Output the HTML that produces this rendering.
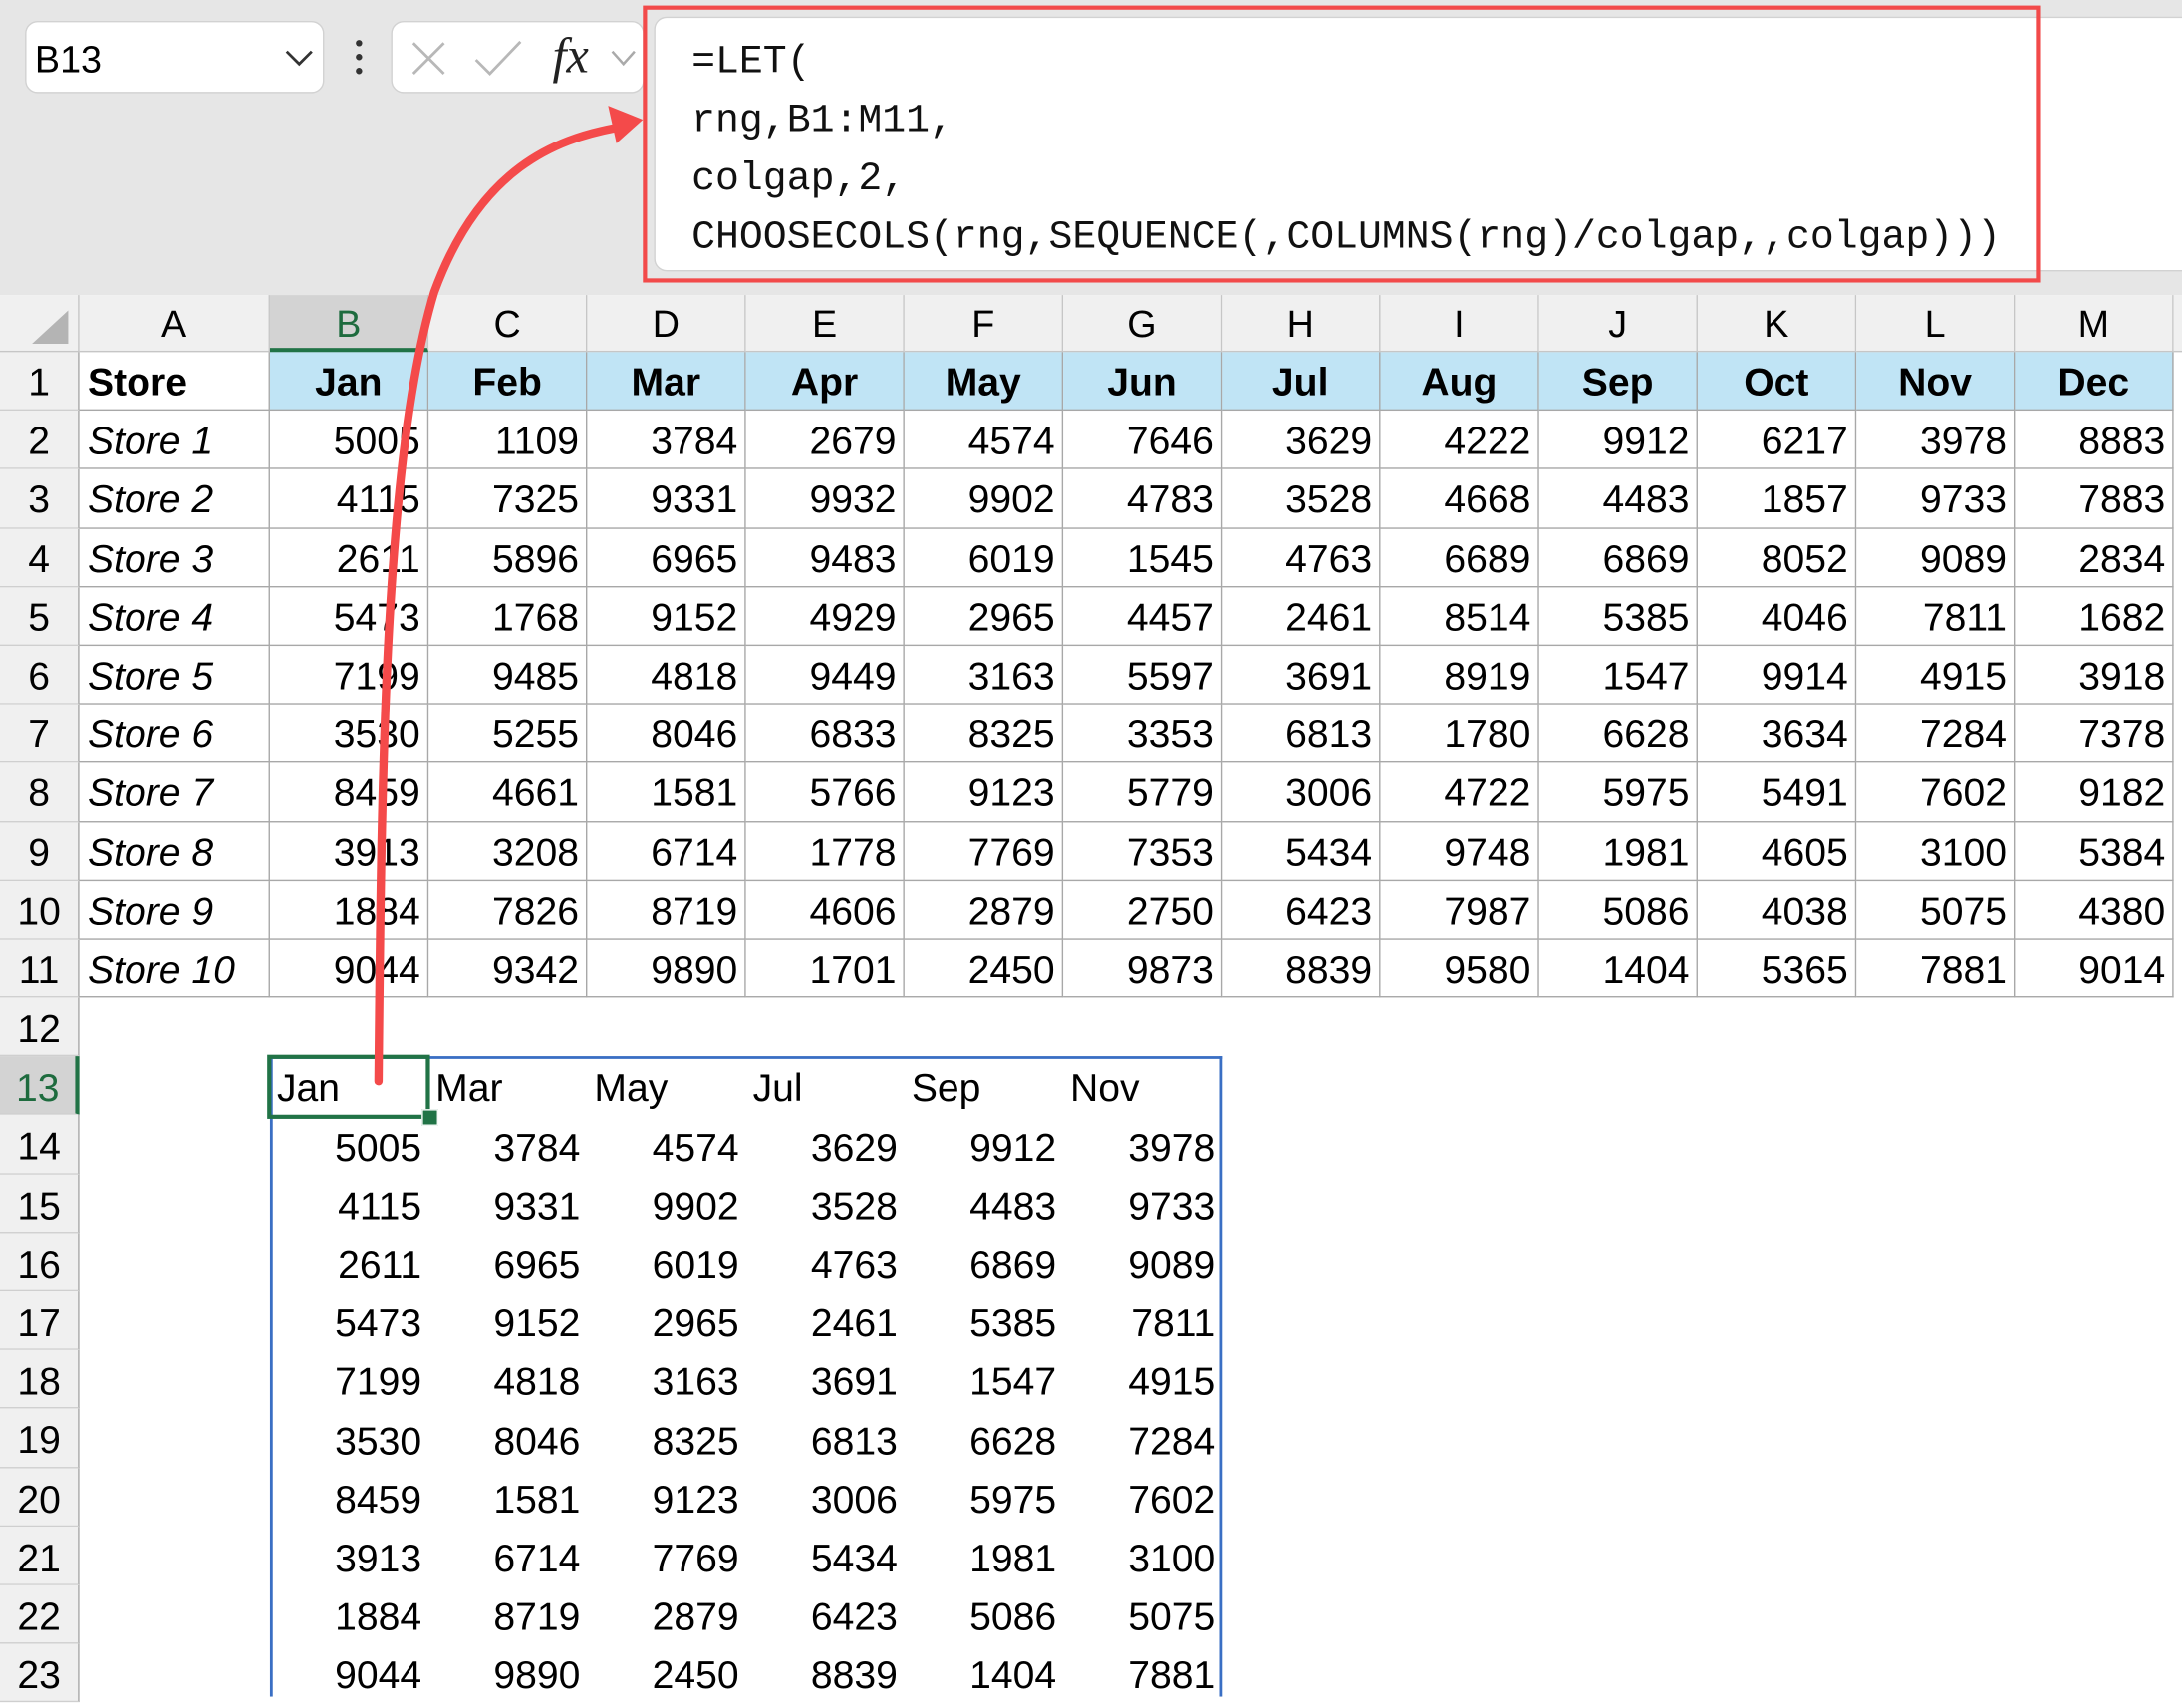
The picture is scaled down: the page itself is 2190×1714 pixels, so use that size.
<!DOCTYPE html>
<html><head><meta charset="utf-8">
<style>
html,body{margin:0;padding:0;background:#fff;width:2190px;height:1687px;overflow:hidden}
#w{position:absolute;left:0;top:0;width:1568px;height:1208px;transform:scale(1.39668);transform-origin:0 0;font-family:"Liberation Sans",sans-serif;color:#000}
.top{position:absolute;left:0;top:0;width:1568px;height:212px;background:#e6e6e6}
.nb{position:absolute;left:18px;top:15px;width:215px;height:52px;background:#fff;border:1.5px solid #d2d2d2;border-radius:9px;box-sizing:border-box}
.nb span{position:absolute;left:6px;top:12px;font-size:27px}
.fxb{position:absolute;left:281px;top:15px;width:182px;height:52px;background:#fff;border:1.5px solid #d2d2d2;border-radius:9px;box-sizing:border-box}
.fb{position:absolute;left:470px;top:12px;width:1110px;height:183px;background:#fff;border:1.5px solid #d2d2d2;border-radius:9px;box-sizing:border-box}
.fb pre{margin:0;position:absolute;left:26px;top:11px;font-family:"Liberation Mono",monospace;font-size:28.5px;line-height:42px;color:#111}
.red{position:absolute;left:462px;top:4px;width:1004px;height:199px;border:3.5px solid #f24a4a;box-sizing:border-box}
.g{position:absolute;left:0;top:212px;display:grid;grid-template-columns:57px 137px repeat(12,114px) 20px;grid-template-rows:41px repeat(11,42.2px)}
.g div{box-sizing:border-box;font-size:28px;line-height:44px;white-space:nowrap;overflow:hidden;border-right:1.4px solid #a8a8a8;border-bottom:1.4px solid #a8a8a8;text-align:right;padding-right:5px}
.g .h{background:#f0f0f0;text-align:center;padding:0;font-size:27px;line-height:42px;border-color:#c6c6c6}
.g .hs{background:#d3d3d3;color:#1e6b3e;border-bottom:3px solid #217346}
.g .r{background:#f0f0f0;text-align:center;padding:0;font-size:28px;border-right:1.4px solid #a8a8a8;border-bottom:1.4px solid #cfcfcf}
.g .m{background:#c0e4f5;font-weight:bold;text-align:center;padding:0}
.g .s{text-align:left;padding-left:6px;font-style:italic}
.g .sb{text-align:left;padding-left:6px;font-weight:bold}
.rh{position:absolute;left:0;top:717px;width:57px}
.rh div{height:42.2px;box-sizing:border-box;background:#f0f0f0;border-right:1.4px solid #a8a8a8;border-bottom:1.4px solid #cfcfcf;text-align:center;font-size:28px;line-height:45px}
.rh .sel{background:#d3d3d3;color:#1e6b3e;border-right:3px solid #217346}
.sp{position:absolute;left:194px;top:759.4px;width:684px;height:460px;border:2px solid #3a6fc4;border-bottom:none;box-sizing:border-box}
.sg{position:absolute;left:194px;top:759.4px;display:grid;grid-template-columns:repeat(6,114px);grid-auto-rows:42.2px}
.sg div{font-size:28px;line-height:46px;text-align:right;padding-right:5px;box-sizing:border-box}
.sg .l{text-align:left;padding-left:5px;padding-right:0}
.cur{position:absolute;left:192px;top:757.5px;width:117px;height:46px;border:3px solid #217346;box-sizing:border-box}
.fh{position:absolute;left:303px;top:797px;width:10px;height:10px;background:#217346;border:1px solid #fff}
</style></head><body><div id="w">
<div class="top"></div>
<div class="nb"><span>B13</span>
<svg style="position:absolute;left:185px;top:19px" width="22" height="14"><path d="M2 2 L11 11 L20 2" fill="none" stroke="#333" stroke-width="2"/></svg></div>
<svg style="position:absolute;left:253px;top:28px" width="10" height="28"><circle cx="5" cy="3" r="2.3" fill="#333"/><circle cx="5" cy="13" r="2.3" fill="#333"/><circle cx="5" cy="23" r="2.3" fill="#333"/></svg>
<div class="fxb">
<svg style="position:absolute;left:13px;top:13px" width="26" height="26"><path d="M2 2 L24 24 M24 2 L2 24" stroke="#b8b8b8" stroke-width="2"/></svg>
<svg style="position:absolute;left:58px;top:12px" width="36" height="28"><path d="M2 15 L12 25 L34 2" fill="none" stroke="#b8b8b8" stroke-width="2"/></svg>
<span style="position:absolute;left:115px;top:3px;font-family:'Liberation Serif',serif;font-style:italic;font-size:36px;color:#222">fx</span>
<svg style="position:absolute;left:156px;top:19px" width="20" height="14"><path d="M2 2 L10 11 L18 2" fill="none" stroke="#aaa" stroke-width="1.8"/></svg>
</div>
<div class="fb"><pre>=LET(
rng,B1:M11,
colgap,2,
CHOOSECOLS(rng,SEQUENCE(,COLUMNS(rng)/colgap,,colgap)))</pre></div>
<div class="red"></div>

<div class="g">
<div class="h" style="position:relative"><svg style="position:absolute;left:22px;top:10px" width="28" height="26"><path d="M27 1 L27 25 L1 25 Z" fill="#b4b4b4"/></svg></div><div class="h">A</div><div class="h hs">B</div><div class="h">C</div><div class="h">D</div><div class="h">E</div><div class="h">F</div><div class="h">G</div><div class="h">H</div><div class="h">I</div><div class="h">J</div><div class="h">K</div><div class="h">L</div><div class="h">M</div><div class="h" style="border-right:none"></div>
<div class="r">1</div><div class="sb">Store</div><div class="m">Jan</div><div class="m">Feb</div><div class="m">Mar</div><div class="m">Apr</div><div class="m">May</div><div class="m">Jun</div><div class="m">Jul</div><div class="m">Aug</div><div class="m">Sep</div><div class="m">Oct</div><div class="m">Nov</div><div class="m">Dec</div><div style="border:none"></div>
<div class="r">2</div><div class="s">Store 1</div><div>5005</div><div>1109</div><div>3784</div><div>2679</div><div>4574</div><div>7646</div><div>3629</div><div>4222</div><div>9912</div><div>6217</div><div>3978</div><div>8883</div><div style="border:none"></div>
<div class="r">3</div><div class="s">Store 2</div><div>4115</div><div>7325</div><div>9331</div><div>9932</div><div>9902</div><div>4783</div><div>3528</div><div>4668</div><div>4483</div><div>1857</div><div>9733</div><div>7883</div><div style="border:none"></div>
<div class="r">4</div><div class="s">Store 3</div><div>2611</div><div>5896</div><div>6965</div><div>9483</div><div>6019</div><div>1545</div><div>4763</div><div>6689</div><div>6869</div><div>8052</div><div>9089</div><div>2834</div><div style="border:none"></div>
<div class="r">5</div><div class="s">Store 4</div><div>5473</div><div>1768</div><div>9152</div><div>4929</div><div>2965</div><div>4457</div><div>2461</div><div>8514</div><div>5385</div><div>4046</div><div>7811</div><div>1682</div><div style="border:none"></div>
<div class="r">6</div><div class="s">Store 5</div><div>7199</div><div>9485</div><div>4818</div><div>9449</div><div>3163</div><div>5597</div><div>3691</div><div>8919</div><div>1547</div><div>9914</div><div>4915</div><div>3918</div><div style="border:none"></div>
<div class="r">7</div><div class="s">Store 6</div><div>3530</div><div>5255</div><div>8046</div><div>6833</div><div>8325</div><div>3353</div><div>6813</div><div>1780</div><div>6628</div><div>3634</div><div>7284</div><div>7378</div><div style="border:none"></div>
<div class="r">8</div><div class="s">Store 7</div><div>8459</div><div>4661</div><div>1581</div><div>5766</div><div>9123</div><div>5779</div><div>3006</div><div>4722</div><div>5975</div><div>5491</div><div>7602</div><div>9182</div><div style="border:none"></div>
<div class="r">9</div><div class="s">Store 8</div><div>3913</div><div>3208</div><div>6714</div><div>1778</div><div>7769</div><div>7353</div><div>5434</div><div>9748</div><div>1981</div><div>4605</div><div>3100</div><div>5384</div><div style="border:none"></div>
<div class="r">10</div><div class="s">Store 9</div><div>1884</div><div>7826</div><div>8719</div><div>4606</div><div>2879</div><div>2750</div><div>6423</div><div>7987</div><div>5086</div><div>4038</div><div>5075</div><div>4380</div><div style="border:none"></div>
<div class="r">11</div><div class="s">Store 10</div><div>9044</div><div>9342</div><div>9890</div><div>1701</div><div>2450</div><div>9873</div><div>8839</div><div>9580</div><div>1404</div><div>5365</div><div>7881</div><div>9014</div><div style="border:none"></div>
</div>

<div class="rh"><div>12</div><div class="sel">13</div><div>14</div><div>15</div><div>16</div><div>17</div><div>18</div><div>19</div><div>20</div><div>21</div><div>22</div><div>23</div></div>

<div class="sp"></div>
<div class="sg">
<div class="l">Jan</div><div class="l">Mar</div><div class="l">May</div><div class="l">Jul</div><div class="l">Sep</div><div class="l">Nov</div>
<div>5005</div><div>3784</div><div>4574</div><div>3629</div><div>9912</div><div>3978</div>
<div>4115</div><div>9331</div><div>9902</div><div>3528</div><div>4483</div><div>9733</div>
<div>2611</div><div>6965</div><div>6019</div><div>4763</div><div>6869</div><div>9089</div>
<div>5473</div><div>9152</div><div>2965</div><div>2461</div><div>5385</div><div>7811</div>
<div>7199</div><div>4818</div><div>3163</div><div>3691</div><div>1547</div><div>4915</div>
<div>3530</div><div>8046</div><div>8325</div><div>6813</div><div>6628</div><div>7284</div>
<div>8459</div><div>1581</div><div>9123</div><div>3006</div><div>5975</div><div>7602</div>
<div>3913</div><div>6714</div><div>7769</div><div>5434</div><div>1981</div><div>3100</div>
<div>1884</div><div>8719</div><div>2879</div><div>6423</div><div>5086</div><div>5075</div>
<div>9044</div><div>9890</div><div>2450</div><div>8839</div><div>1404</div><div>7881</div>
</div>
<div class="cur"></div><div class="fh"></div>

<svg style="position:absolute;left:0;top:0" width="1568" height="1208">
<path d="M272 777 C274 560 276 330 312 210 C345 120 400 100 442 92" fill="none" stroke="#f44a4a" stroke-width="6" stroke-linecap="round"/>
<path d="M462 86 L437 76 L443 103 Z" fill="#f44a4a"/>
</svg>
</div></body></html>
